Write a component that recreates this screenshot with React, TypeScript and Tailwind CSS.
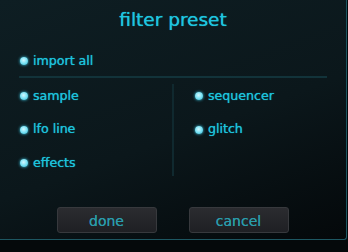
import React from 'react';

const Dot = () => (
  <span className="w-[8px] h-[8px] rounded-full bg-[radial-gradient(circle_at_45%_40%,#d4f8ff_0%,#7ae2f5_50%,#2fb2cc_100%)] shadow-[0_0_3px_#3fd0ee] shrink-0" />
);

const Item = ({ label }: { label: string }) => (
  <div className="flex items-center h-[20px] gap-[5px]">
    <Dot />
    <span className="text-[12.6px] leading-none text-[#1cc3db] [text-shadow:0_0_0.8px_#1cc3db]">{label}</span>
  </div>
);

const PresetButton = ({ label }: { label: string }) => (
  <button className="w-[100px] h-[26px] rounded-[3px] border border-[#37393d] bg-[linear-gradient(#2b2c30,#1f2024)] text-[14px] leading-none text-[#2a9cab] [text-shadow:0_0_0.5px_#2a9cab] pt-[1px]">
    {label}
  </button>
);

export default function App() {
  return (
    <div className="w-[348px] h-[252px] bg-[#05090b] overflow-hidden" style={{ fontFamily: '"DejaVu Sans", "Liberation Sans", sans-serif' }}>
      <div className="w-[347px] h-[240px] border-r border-b border-[#1d5762] rounded-br-[3px] bg-[linear-gradient(160deg,#0e1e23_0%,#0b171b_55%,#04080a_100%)] flex flex-col">
        <h1 className="pt-[8px] h-[32px] text-center text-[18.5px] leading-[24px] text-[#1ec6df] [text-shadow:0_0_0.8px_#1ec6df]">filter preset</h1>
        <div className="pl-[20px] pt-[19px]">
          <Item label="import all" />
        </div>
        <div className="ml-[19px] mt-[5px] w-[308px] h-[2px] bg-[#12333a]" />
        <div className="flex ml-[19px] mt-[6px]">
          <div className="w-[153px] pl-[1px] pt-[2px] flex flex-col gap-[13.5px]">
            <Item label="sample" />
            <Item label="lfo line" />
            <Item label="effects" />
          </div>
          <div className="w-[2px] h-[92px] bg-[#10292f]" />
          <div className="pl-[21px] pt-[2px] flex flex-col gap-[13.5px]">
            <Item label="sequencer" />
            <Item label="glitch" />
          </div>
        </div>
        <div className="flex justify-center gap-[32px] mt-[31px] -ml-[1px]">
          <PresetButton label="done" />
          <PresetButton label="cancel" />
        </div>
      </div>
    </div>
  );
}
